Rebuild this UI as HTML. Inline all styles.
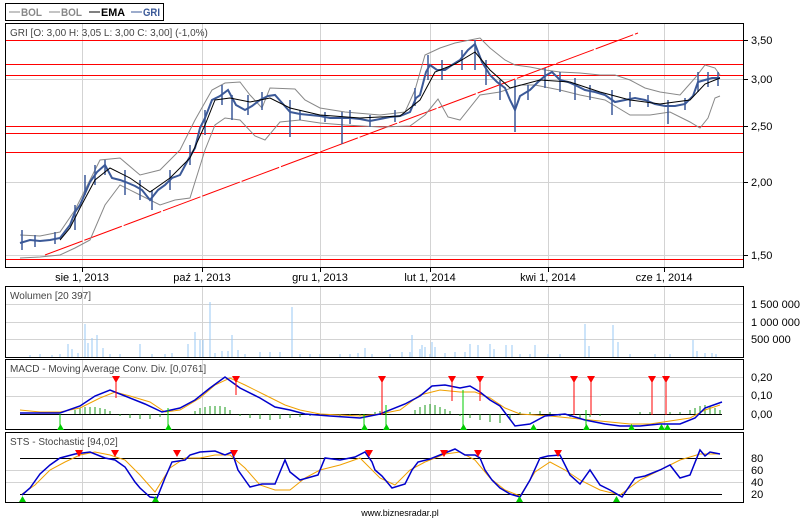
<!DOCTYPE html>
<html><head><meta charset="utf-8"><style>
body{margin:0;background:#fff;width:800px;height:520px;overflow:hidden}
svg{display:block;font-family:"Liberation Sans",sans-serif}
</style></head><body>
<svg width="800" height="520" viewBox="0 0 800 520">
<!-- legend -->
<rect x="5.5" y="3.5" width="158" height="17" fill="#fff" stroke="#000"/>
<g font-size="11" font-weight="bold">
<line x1="9" y1="12" x2="20" y2="12" stroke="#888"/><text x="21" y="16" fill="#888" textLength="21" lengthAdjust="spacingAndGlyphs">BOL</text>
<line x1="49" y1="12" x2="60" y2="12" stroke="#888"/><text x="61" y="16" fill="#888" textLength="21" lengthAdjust="spacingAndGlyphs">BOL</text>
<line x1="89" y1="12" x2="100" y2="12" stroke="#000"/><text x="101" y="16" fill="#000" textLength="24" lengthAdjust="spacingAndGlyphs">EMA</text>
<line x1="131" y1="12" x2="142" y2="12" stroke="#3b5998"/><text x="143" y="16" fill="#3b5998" textLength="17" lengthAdjust="spacingAndGlyphs">GRI</text>
</g>
<!-- main panel -->
<rect x="5.5" y="23.5" width="738" height="244" fill="#fff" stroke="#000"/>
<g stroke="#d3d3d3">
<line x1="82.5" y1="24" x2="82.5" y2="267"/><line x1="202.5" y1="24" x2="202.5" y2="267"/><line x1="320.5" y1="24" x2="320.5" y2="267"/><line x1="430.5" y1="24" x2="430.5" y2="267"/><line x1="548.5" y1="24" x2="548.5" y2="267"/><line x1="664.5" y1="24" x2="664.5" y2="267"/>
<line x1="6" y1="79.5" x2="743" y2="79.5"/><line x1="6" y1="182.5" x2="743" y2="182.5"/><line x1="6" y1="255.5" x2="743" y2="255.5"/>
</g>
<g stroke="#f00">
<line x1="6" y1="40.5" x2="743" y2="40.5"/><line x1="6" y1="64.5" x2="743" y2="64.5"/><line x1="6" y1="75.5" x2="743" y2="75.5"/><line x1="6" y1="126.5" x2="743" y2="126.5"/><line x1="6" y1="133.5" x2="743" y2="133.5"/><line x1="6" y1="152.5" x2="743" y2="152.5"/><line x1="6" y1="259.5" x2="743" y2="259.5"/>
<line x1="45" y1="255" x2="638" y2="33" stroke-dasharray="40 2"/>
</g>
<g stroke="#000"><line x1="744" y1="40.5" x2="748" y2="40.5"/><line x1="744" y1="79.5" x2="748" y2="79.5"/><line x1="744" y1="126.5" x2="748" y2="126.5"/><line x1="744" y1="182.5" x2="748" y2="182.5"/><line x1="744" y1="255.5" x2="748" y2="255.5"/>
<line x1="82.5" y1="268" x2="82.5" y2="272"/><line x1="202.5" y1="268" x2="202.5" y2="272"/><line x1="320.5" y1="268" x2="320.5" y2="272"/><line x1="430.5" y1="268" x2="430.5" y2="272"/><line x1="548.5" y1="268" x2="548.5" y2="272"/><line x1="664.5" y1="268" x2="664.5" y2="272"/></g>
<g font-size="11" fill="#000">
<text x="751" y="44">3,50</text><text x="751" y="83">3,00</text><text x="751" y="130">2,50</text><text x="751" y="186">2,00</text><text x="751" y="259">1,50</text>
<text x="82" y="281" text-anchor="middle">sie 1, 2013</text><text x="202" y="281" text-anchor="middle">paź 1, 2013</text><text x="320" y="281" text-anchor="middle">gru 1, 2013</text><text x="430" y="281" text-anchor="middle">lut 1, 2014</text><text x="548" y="281" text-anchor="middle">kwi 1, 2014</text><text x="664" y="281" text-anchor="middle">cze 1, 2014</text>
</g>
<text x="10" y="36" font-size="10" fill="#444">GRI [O: 3,00  H: 3,05  L: 3,00  C: 3,00] (-1,0%)</text>
<!-- bollinger -->
<g fill="none" stroke="#888">
<polyline points="20,235 40,236 60,232 75,210 90,180 100,160 120,158 140,175 160,170 180,150 195,120 212,90 225,83 240,82 250,95 262,108 270,88 295,89 305,100 320,108 345,112 380,115 405,112 415,90 425,55 440,48 455,43 470,40 480,38 490,48 505,60 515,65 530,67 545,70 560,72 580,73 600,75 615,75 630,80 645,88 660,92 680,95 695,78 705,65 715,68 720,75"/>
<polyline points="20,258 40,257 60,255 75,248 90,240 105,205 120,185 140,195 160,205 175,200 190,198 205,150 215,125 225,118 240,120 255,136 265,140 280,122 300,120 320,123 345,125 380,127 410,126 425,115 438,99 448,117 460,120 480,95 500,92 520,85 535,85 560,90 580,95 605,100 630,115 650,115 670,112 690,122 700,128 708,118 715,98 720,96"/>
</g>
<!-- price -->
<polyline fill="none" stroke="#3b5998" stroke-width="2" points="20,243 30,240 40,241 50,240 60,238 70,225 75,212 80,205 90,182 97,172 105,165 112,178 120,180 128,183 135,186 142,190 150,200 158,190 165,185 172,178 180,175 188,160 195,148 200,128 205,118 212,100 220,96 228,90 236,105 245,110 252,106 260,100 268,96 275,95 283,104 290,112 300,114 310,115 320,116 330,118 340,118 350,118 360,119 370,121 380,119 390,117 400,116 410,112 416,98 420,95 426,72 430,65 437,70 445,70 452,65 460,60 468,50 475,44 482,62 490,75 497,82 505,88 510,100 515,110 520,96 530,90 538,82 545,76 552,72 560,80 568,82 575,85 585,90 595,92 605,95 615,102 625,100 635,98 645,100 655,104 665,106 675,106 685,104 693,96 698,82 705,80 712,78 720,78"/>
<g stroke="#3b5998" stroke-width="1.5">
<path d="M22 230v20M35 235v12M55 232v12M75 205v25M85 175v20M95 165v20M105 160v15M125 170v25M140 180v20M152 190v20M170 170v20M190 145v20M205 110v25M222 85v20M232 95v25M248 95v20M262 92v18M290 100v37M300 110v10M325 112v10M342 112v32M350 110v14M370 115v12M395 110v12M415 88v18M428 55v25M442 60v20M462 50v20M475 40v30M486 60v25M500 80v20M515 80v52M528 85v15M545 68v20M560 72v20M575 78v22M590 85v15M612 90v25M630 92v15M648 95v12M668 100v24M685 98v12M698 72v20M708 72v15M718 72v14"/>
</g>
<polyline fill="none" stroke="#000" points="60,240 70,228 80,208 95,180 110,168 130,178 150,192 170,178 190,158 205,125 215,100 230,98 250,102 270,98 290,108 320,115 360,118 400,116 420,100 435,72 455,64 475,52 490,70 510,88 540,80 570,82 600,92 630,100 660,104 690,100 705,84 720,78"/>
<!-- volume -->
<rect x="5.5" y="286.5" width="738" height="71" fill="#fff" stroke="#000"/>
<g stroke="#d3d3d3"><line x1="82.5" y1="287" x2="82.5" y2="357"/><line x1="202.5" y1="287" x2="202.5" y2="357"/><line x1="320.5" y1="287" x2="320.5" y2="357"/><line x1="430.5" y1="287" x2="430.5" y2="357"/><line x1="548.5" y1="287" x2="548.5" y2="357"/><line x1="664.5" y1="287" x2="664.5" y2="357"/>
<line x1="6" y1="304.5" x2="743" y2="304.5"/><line x1="6" y1="322.5" x2="743" y2="322.5"/><line x1="6" y1="339.5" x2="743" y2="339.5"/></g>
<path stroke="#99c9f5" d="M30 357v-2M40 357v-3M52 357v-2M60 357v-3M68 357v-13M72 357v-8M78 357v-4M85 357v-33M88 357v-14M92 357v-19M97 357v-22M103 357v-9M110 357v-3M120 357v-3M140 357v-13M152 357v-3M165 357v-3M172 357v-4M188 357v-13M195 357v-25M200 357v-17M203 357v-17M210 357v-55M215 357v-4M222 357v-6M228 357v-6M232 357v-22M238 357v-7M245 357v-3M260 357v-5M270 357v-5M280 357v-5M292 357v-50M300 357v-3M310 357v-3M320 357v-3M340 357v-3M350 357v-3M358 357v-4M365 357v-9M372 357v-3M390 357v-3M402 357v-5M410 357v-5M420 357v-8M430 357v-3M412 357v-22M422 357v-12M425 357v-10M432 357v-15M435 357v-10M445 357v-4M455 357v-5M465 357v-5M470 357v-13M478 357v-12M490 357v-13M494 357v-8M506 357v-12M512 357v-12M520 357v-3M530 357v-3M535 357v-12M548 357v-3M560 357v-3M585 357v-33M589 357v-11M613 357v-32M618 357v-15M630 357v-3M655 357v-3M670 357v-3M693 357v-17M697 357v-6M705 357v-4M712 357v-4M716 357v-3"/>
<text x="10" y="299" font-size="10" fill="#444">Wolumen [20 397]</text>
<g font-size="11"><text x="751" y="308">1 500 000</text><text x="751" y="326">1 000 000</text><text x="751" y="343">500 000</text></g>
<!-- MACD -->
<rect x="5.5" y="359.5" width="738" height="70" fill="#fff" stroke="#000"/>
<g stroke="#d3d3d3"><line x1="82.5" y1="360" x2="82.5" y2="429"/><line x1="202.5" y1="360" x2="202.5" y2="429"/><line x1="320.5" y1="360" x2="320.5" y2="429"/><line x1="430.5" y1="360" x2="430.5" y2="429"/><line x1="548.5" y1="360" x2="548.5" y2="429"/><line x1="664.5" y1="360" x2="664.5" y2="429"/>
<line x1="6" y1="377.5" x2="743" y2="377.5"/><line x1="6" y1="396.5" x2="743" y2="396.5"/></g>
<line x1="20" y1="414.5" x2="722" y2="414.5" stroke="#000"/>
<path stroke="#1a9a1a" d="M75 414v-4M80 414v-6M85 414v-7M90 414v-7M95 414v-7M100 414v-6M105 414v-5M110 414v-3M120 414v2M130 414v4M140 414v5M150 414v5M160 414v3M195 414v-3M200 414v-6M205 414v-7M210 414v-8M215 414v-8M220 414v-8M225 414v-7M230 414v-4M240 414v2M250 414v4M260 414v5M270 414v6M280 414v5M290 414v4M300 414v3M310 414v2M340 414v2M350 414v2M360 414v2M375 414v-2M380 414v-3M385 414v-3M415 414v-4M420 414v-7M425 414v-9M430 414v-10M435 414v-9M440 414v-7M445 414v-5M450 414v-3M460 414v2M470 414v4M480 414v6M490 414v8M500 414v9M510 414v5M520 414v-2M530 414v-2M540 414v-3M550 414v-2M560 414v2M570 414v3M580 414v4M590 414v3M600 414v2M640 414v-2M650 414v-2M670 414v-2M680 414v-2M690 414v-4M695 414v-6M700 414v-8M705 414v-9M710 414v-8M715 414v-6M720 414v-4"/>
<polyline fill="none" stroke="#f0a000" points="20,410 40,412 60,412 80,408 100,398 115,392 130,396 150,402 165,412 180,410 200,398 215,385 230,378 245,385 265,395 285,405 300,410 320,414 340,415 360,416 380,414 400,410 420,395 440,390 460,392 475,392 490,398 505,408 520,414 535,415 550,416 570,418 590,420 610,422 630,424 650,424 670,421 690,418 705,410 720,405"/>
<polyline fill="none" stroke="#0000cc" stroke-width="1.5" points="20,413 40,413 60,413 80,406 95,396 110,390 125,396 145,404 162,412 180,408 195,400 210,388 225,377 240,388 260,398 275,407 290,410 305,414 330,416 360,418 380,414 405,404 420,396 432,386 445,385 460,388 470,386 480,392 490,400 500,406 515,426 530,424 545,416 565,414 585,420 605,424 620,426 640,426 660,424 680,424 695,418 705,408 722,402"/>
<g stroke="#f00"><path d="M116 378v20M236 378v17M382 378v37M452 378v23M480 378v23M574 378v37M591 378v37M652 378v37M666 378v37"/></g>
<g fill="#f00"><path d="M112 376h8l-4 7z M232 376h8l-4 7z M378 376h8l-4 7z M448 376h8l-4 7z M476 376h8l-4 7z M570 376h8l-4 7z M587 376h8l-4 7z M648 376h8l-4 7z M662 376h8l-4 7z"/></g>
<g stroke="#0c0"><path d="M60 414v12M168 408v18M364 414v12M386 405v21M463 390v36M586 410v16"/></g>
<g fill="#0c0"><path d="M57 430h7l-3.5-6z M165 430h7l-3.5-6z M361 430h7l-3.5-6z M383 430h7l-3.5-6z M460 430h7l-3.5-6z M530 430h7l-3.5-6z M583 430h7l-3.5-6z M628 430h7l-3.5-6z M658 430h7l-3.5-6z M664 430h7l-3.5-6z"/></g>
<text x="10" y="372" font-size="10" fill="#444">MACD - Moving Average Conv. Div. [0,0761]</text>
<g font-size="11"><text x="751" y="381">0,20</text><text x="751" y="399">0,10</text><text x="751" y="418">0,00</text></g>
<!-- STS -->
<rect x="5.5" y="432.5" width="738" height="70" fill="#fff" stroke="#000"/>
<g stroke="#d3d3d3"><line x1="82.5" y1="433" x2="82.5" y2="502"/><line x1="202.5" y1="433" x2="202.5" y2="502"/><line x1="320.5" y1="433" x2="320.5" y2="502"/><line x1="430.5" y1="433" x2="430.5" y2="502"/><line x1="548.5" y1="433" x2="548.5" y2="502"/><line x1="664.5" y1="433" x2="664.5" y2="502"/>
<line x1="6" y1="470.5" x2="743" y2="470.5"/><line x1="6" y1="482.5" x2="743" y2="482.5"/></g>
<g stroke="#000"><line x1="20" y1="458.5" x2="722" y2="458.5"/><line x1="20" y1="494.5" x2="722" y2="494.5"/></g>
<polyline fill="none" stroke="#f0a000" points="22,494 35,485 50,470 65,462 80,455 95,452 110,455 125,460 140,475 155,492 170,468 185,458 200,458 215,455 230,455 245,468 260,485 275,490 290,490 305,478 320,470 340,465 360,458 380,478 395,485 410,470 425,462 445,454 460,452 475,460 490,478 505,490 520,496 535,472 550,462 565,470 580,480 600,490 620,495 640,480 660,470 680,460 700,454 720,454"/>
<polyline fill="none" stroke="#0000cc" stroke-width="1.5" points="22,495 30,488 40,474 50,465 60,458 75,454 90,452 105,458 115,460 125,467 135,482 140,488 150,497 157,498 165,478 172,462 185,460 190,455 200,452 215,451 225,455 232,452 238,470 245,480 250,487 262,484 275,484 285,460 290,472 300,480 318,475 325,458 340,460 355,457 365,452 372,462 375,470 382,476 392,488 405,484 412,470 418,462 430,459 440,455 455,449 465,455 475,455 480,458 485,470 492,480 500,488 510,494 520,497 530,480 540,458 548,456 560,455 570,475 580,484 590,470 600,485 610,490 622,497 635,478 645,476 660,470 670,465 680,478 690,475 700,450 705,456 710,452 720,454"/>
<g fill="#f00"><path d="M75 450h8l-4 7z M111 450h8l-4 7z M173 450h8l-4 7z M230 450h8l-4 7z M365 450h8l-4 7z M440 450h8l-4 7z M474 450h8l-4 7z M554 450h8l-4 7z"/></g>
<g fill="#0c0"><path d="M19 502h7l-3.5-6z M152 502h7l-3.5-6z M516 502h7l-3.5-6z M613 502h7l-3.5-6z"/></g>
<text x="10" y="445" font-size="10" fill="#444">STS - Stochastic [94,02]</text>
<g font-size="11"><text x="751" y="462">80</text><text x="751" y="474">60</text><text x="751" y="486">40</text><text x="751" y="498">20</text></g>
<text x="400" y="516" font-size="9" text-anchor="middle" fill="#000">www.biznesradar.pl</text>
</svg>
</body></html>
